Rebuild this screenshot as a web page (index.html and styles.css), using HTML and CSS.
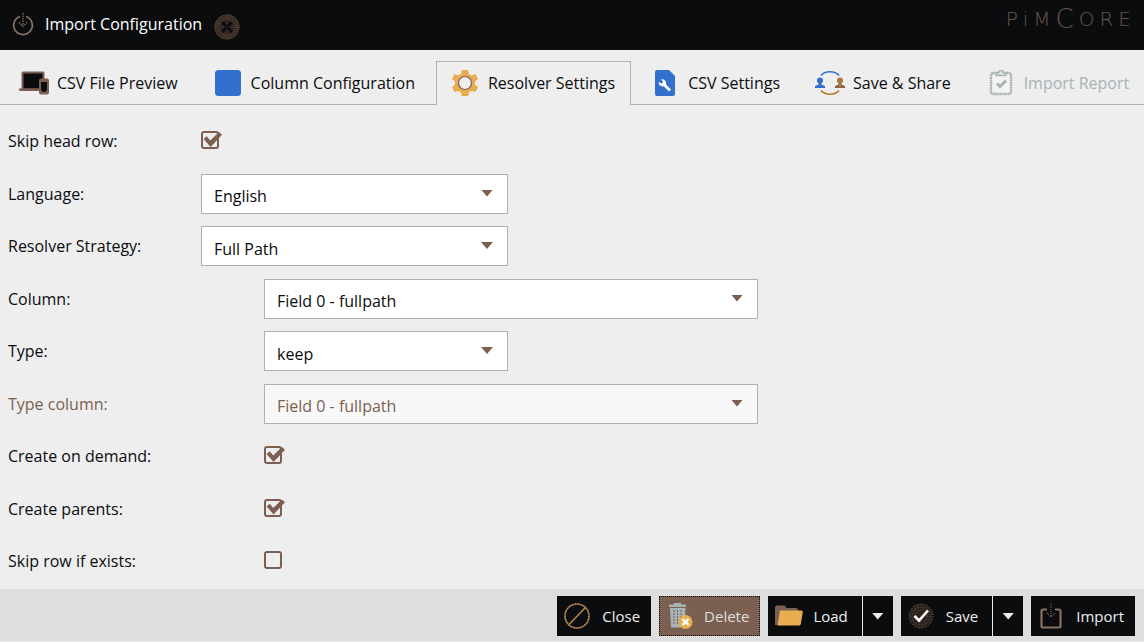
FILE: index.html
```html
<!DOCTYPE html>
<html lang="en">
<head>
<meta charset="utf-8">
<meta name="viewport" content="width=device-width, initial-scale=1">
<title>Import Configuration</title>
<link rel="stylesheet" href="styles.css">
</head>
<body>
<div class="window">
  <header class="titlebar">
    <svg class="title-icon" viewBox="0 0 24 28" fill="none" stroke="#8d756a" stroke-width="1.6">
      <path d="M9 6.500A9.300 9.300 0 1 0 15 6.500"/>
      <path d="M12 3v13M8 12.500l4 4 4-4" stroke-width="1.200" stroke-dasharray="1.500 1"/>
    </svg>
    <h1 class="title">Import Configuration</h1>
    <button class="close-tool" type="button" aria-label="Close window">
      <svg viewBox="0 0 26 26" width="26" height="26">
        <circle cx="13" cy="13" r="12.500" fill="#30261f"/>
        <g fill="none" stroke="#7b6052" stroke-dasharray="1 1"><circle cx="13" cy="13" r="12"/><circle cx="13" cy="13" r="10"/><circle cx="13" cy="13" r="8"/><circle cx="13" cy="13" r="3"/></g>
        <path d="M9 9l2.500 2.500M17 9l-2.500 2.500M9 17l2.500-2.500M17 17l-2.500-2.500" stroke="#0b0c0e" stroke-width="3" stroke-linecap="round"/>
      </svg>
    </button>
    <div class="brand" aria-label="Pimcore"><span>P</span><span>i</span><span>M</span><span class="brand-c">C</span><span>O</span><span>R</span><span>E</span></div>
  </header>

  <nav class="tabs" role="tablist">
    <button class="tab" type="button" role="tab">
      <svg class="icon" viewBox="0 0 30 26">
        <path d="M4 1.500h20a1.500 1.500 0 0 1 1.500 1.500v16H2.500V3A1.500 1.500 0 0 1 4 1.500z" fill="#7b6052"/>
        <path d="M4.500 3.500h19v15h-19z" fill="#0b0c0e"/>
        <path d="M0 18.500h22V21H1.500A1.500 1.500 0 0 1 0 19.500z" fill="#7b6052"/>
        <rect x="20" y="8.500" width="10" height="16" rx="2" fill="#7b6052"/>
        <path d="M22 12h6v8l-2 2h-2l-2-2z" fill="#0b0c0e"/>
      </svg>CSV File Preview</button>
    <button class="tab" type="button" role="tab">
      <svg class="icon" viewBox="0 0 30 26"><rect x="2" width="26" height="26" rx="3.500" fill="#3270cd"/></svg>Column Configuration</button>
    <button class="tab tab-active" type="button" role="tab" aria-selected="true">
      <svg class="icon" viewBox="0 0 30 26">
        <path d="M12 0h6l1 4 2.500 1.500 4-1.500 2.500 5-3 2.500v3l3 2.500-2.500 5-4-1-2.500 1.500-1 4h-6l-1-4-2.500-1.500-4 1L2 17l3-2.500v-3L2 9l2.500-5 4 1.500L11 4z" fill="#e8ad50"/>
        <circle cx="15" cy="13" r="6.500" fill="#eee" stroke="#7b6052" stroke-width="1.200"/>
      </svg>Resolver Settings</button>
    <button class="tab" type="button" role="tab">
      <svg class="icon" viewBox="0 0 30 26">
        <path d="M7 0h12l6 6v18a2 2 0 0 1-2 2H7a2 2 0 0 1-2-2V2a2 2 0 0 1 2-2z" fill="#3270cd"/>
        <path d="M11 9.500a4 4 0 0 1 5 5l5 5-2 2-5.200-5.200a4 4 0 0 1-5-4.800l2.400 2.200 2-2z" fill="#fff"/>
      </svg>CSV Settings</button>
    <button class="tab" type="button" role="tab">
      <svg class="icon" viewBox="0 0 30 26">
        <path d="M6 5.500C10 .500 20 .500 24 5.500" fill="none" stroke="#3270cd" stroke-width="1.600"/>
        <path d="M6 20.500c4 5 14 5 18 0" fill="none" stroke="#b87a2c" stroke-width="1.600"/>
        <circle cx="5" cy="10.500" r="3" fill="#3270cd"/><path d="M3.500 13h3v1.500L10 16v2H0v-2l3.500-1.500z" fill="#3270cd"/>
        <circle cx="25" cy="10.500" r="3" fill="#a97840"/><path d="M23.500 13h3v1.500L30 16v2H20v-2l3.500-1.500z" fill="#8d6548"/>
        <path d="M25 14v4" stroke="#e8ad50" stroke-dasharray="1 1"/>
      </svg>Save &amp; Share</button>
    <button class="tab" type="button" role="tab" disabled>
      <svg class="icon" viewBox="0 0 30 26" fill="none" stroke="#a9b3b5">
        <rect x="5" y="3" width="20" height="21" rx="2.500" stroke-width="2.400" fill="#f3f3f3" stroke-dasharray="2 .5"/>
        <path d="M10 5.500V3h2.500a2.500 2.500 0 0 1 5 0H20v2.500z" stroke-width="1.400" fill="#dfe2e2"/>
        <path d="M11 13.500l3 3 6-6" stroke-width="3"/>
      </svg>Import Report</button>
  </nav>

  <form class="settings" id="settings">
    <div class="row">
      <label class="label" for="skip-head">Skip head row:</label>
      <input class="check" type="checkbox" id="skip-head" checked>
    </div>
    <div class="row">
      <label class="label" for="language">Language:</label>
      <div class="combo combo-medium"><select id="language"><option>English</option></select></div>
    </div>
    <div class="row">
      <label class="label" for="strategy">Resolver Strategy:</label>
      <div class="combo combo-medium"><select id="strategy"><option>Full Path</option></select></div>
    </div>
    <div class="row row-nested">
      <label class="label" for="column">Column:</label>
      <div class="combo combo-wide"><select id="column"><option>Field 0 - fullpath</option></select></div>
    </div>
    <div class="row row-nested">
      <label class="label" for="type">Type:</label>
      <div class="combo combo-narrow"><select id="type"><option>keep</option></select></div>
    </div>
    <div class="row row-nested row-disabled">
      <label class="label" for="type-column">Type column:</label>
      <div class="combo combo-wide"><select id="type-column" disabled><option>Field 0 - fullpath</option></select></div>
    </div>
    <div class="row row-nested">
      <label class="label" for="on-demand">Create on demand:</label>
      <input class="check" type="checkbox" id="on-demand" checked>
    </div>
    <div class="row row-nested">
      <label class="label" for="parents">Create parents:</label>
      <input class="check" type="checkbox" id="parents" checked>
    </div>
    <div class="row row-nested">
      <label class="label" for="skip-existing">Skip row if exists:</label>
      <input class="check" type="checkbox" id="skip-existing">
    </div>
  </form>

  <footer class="actions">
    <button class="action" type="button">
      <svg class="icon" viewBox="0 0 30 26" fill="none">
        <circle cx="14" cy="13" r="12" stroke="#94704f" stroke-width="1.600"/>
        <circle cx="14" cy="13" r="12" stroke="#d29b49" stroke-width="1.200" stroke-dasharray="1 2"/>
        <path d="M6 21.500L22.500 4.500" stroke="#b88849" stroke-width="1.600"/>
      </svg>Close</button>
    <button class="action action-hover" type="button">
      <svg class="icon" viewBox="0 0 30 26">
        <path d="M4 1.500h5V0h7v1.500h5V4H4z" fill="#a9b3b5"/>
        <path d="M5 5h15.500l-1 19.500H6z" fill="#a9b3b5"/>
        <path d="M9 7v15M12.500 7v15M16 7v15" stroke="#7b6052" stroke-dasharray="2 1"/>
        <circle cx="20.500" cy="19" r="7" fill="#e8ad50"/>
        <path d="M17.500 16l6 6M23.500 16l-6 6" stroke="#fff" stroke-width="2.400"/>
      </svg>Delete</button>
    <div class="split">
      <button class="action" type="button">
        <svg class="icon" viewBox="0 0 30 26">
          <path d="M1 4.500a2 2 0 0 1 2-2h7.500l2 2.500H22a2 2 0 0 1 2 2v15H1z" fill="#7b6052"/>
          <path d="M6 7.500h21.500a1.300 1.300 0 0 1 1.300 1.500l-2 12a2 2 0 0 1-2 1.500H3.500z" fill="#e8ad50"/>
        </svg>Load</button>
      <button class="caret" type="button" aria-label="Load options"></button>
    </div>
    <div class="split">
      <button class="action" type="button">
        <svg class="icon" viewBox="0 0 30 26" fill="none">
          <circle cx="14" cy="13" r="12" fill="#2c231f"/>
          <g stroke="#7b6052"><circle cx="14" cy="13" r="12" stroke-dasharray="1 1.500"/><circle cx="14" cy="13" r="9" stroke-dasharray="1 2"/><circle cx="14" cy="13" r="6" stroke-dasharray="1 2"/></g>
          <path d="M7.500 13l4.500 4.500 9-10" stroke="#fff" stroke-width="2.600"/>
        </svg>Save</button>
      <button class="caret" type="button" aria-label="Save options"></button>
    </div>
    <button class="action" type="submit" form="settings">
      <svg class="icon" viewBox="0 0 30 26" fill="none">
        <path d="M10 6.500H6A1.500 1.500 0 0 0 4.500 8v15A1.500 1.500 0 0 0 6 24.500h16a1.500 1.500 0 0 0 1.500-1.500V8A1.500 1.500 0 0 0 22 6.500h-4" stroke="#8a6e60" stroke-width="2.200"/>
        <path d="M14 0v14M10 10l4 4 4-4" stroke="#7b6052" stroke-width="1.200" stroke-dasharray="1 1"/>
      </svg>Import</button>
  </footer>
</div>
</body>
</html>
```
FILE: styles.css
```css
* {
  box-sizing: border-box;
}

body {
  margin: 0;
  background: #eee;
  color: #0b0c0e;
  font: 16px/24px "Open Sans", "Noto Sans", sans-serif;
}

button,
select {
  font: inherit;
  color: inherit;
}

button {
  margin: 0;
  border: 0;
  background: none;
  white-space: nowrap;
}

.window {
  display: flex;
  flex-direction: column;
  min-height: 100vh;
}

/* Title bar */
.titlebar {
  display: flex;
  align-items: center;
  height: 50px;
  padding: 0 13px 2px 11px;
  background: #0b0c0e;
  color: #fff;
}

.title-icon {
  width: 24px;
  height: 28px;
}

.title {
  margin: 0 6px 0 10px;
  font-size: 16px;
  font-weight: 400;
}

.close-tool {
  display: flex;
  padding: 6px 6px 0;
}

.brand {
  display: flex;
  align-items: center;
  gap: 5px;
  margin-left: auto;
  padding-bottom: 10px;
  color: #6b5549;
  font-family: "DejaVu Sans", sans-serif;
  font-size: 20px;
  font-weight: 200;
  line-height: 20px;
}

.brand-c {
  font-size: 26px;
}

/* Tabs */
.tabs {
  display: flex;
  align-items: flex-end;
  gap: 5px;
  height: 55px;
  padding-left: 5px;
  box-shadow: inset 0 -1px #a9b3b5;
}

.tab {
  display: flex;
  align-items: center;
  gap: 8px;
  height: 44px;
  padding: 0 15px 2px 13px;
  border: 1px solid transparent;
  border-bottom: 0;
}

.tab-active {
  border-color: #a9b3b5;
  background: #eee;
}

.tab:disabled {
  color: #a9b3b5;
}

.icon {
  flex: none;
  width: 30px;
  height: 26px;
}

/* Form */
.settings {
  display: flex;
  flex: 1;
  flex-direction: column;
  justify-content: space-between;
  padding: 16px 8px 8px;
}

.row {
  display: flex;
  align-items: center;
  height: 40px;
}

.label {
  flex: none;
  width: 193px;
}

.row-nested .label {
  width: 256px;
}

.row-disabled {
  color: #7b6052;
}

.combo {
  position: relative;
  flex: 0 1 auto;
  height: 40px;
}

.combo-narrow {
  width: 244px;
}

.combo-medium {
  width: 307px;
}

.combo-wide {
  width: 494px;
}

.combo select {
  width: 100%;
  height: 100%;
  padding: 5px 40px 0 12px;
  border: 1px solid #a9b3b5;
  border-radius: 0;
  background: #fff;
  appearance: none;
}

.combo select:disabled {
  background: #f8f8f8;
  opacity: 1;
}

.combo::after {
  position: absolute;
  top: 16px;
  right: 15px;
  width: 12px;
  height: 7px;
  background: #7b6052;
  clip-path: polygon(0 0, 100% 0, 50% 100%);
  content: "";
  pointer-events: none;
}

.check {
  position: relative;
  width: 18px;
  height: 18px;
  margin: 0 0 2px;
  border: 2px solid #7b6052;
  border-radius: 3px;
  appearance: none;
}

.check:checked::after {
  position: absolute;
  top: -1px;
  left: 0;
  width: 19px;
  height: 15px;
  background: #7b6052;
  clip-path: polygon(3% 46%, 20% 28%, 38% 56%, 84% 0, 100% 18%, 40% 100%);
  content: "";
}

/* Footer */
.actions {
  display: flex;
  flex-wrap: wrap;
  justify-content: flex-end;
  gap: 8px;
  padding: 7px 9px 5px;
  border-bottom: 1px solid #eee;
  background: #dedede;
  font-size: 15px;
}

.action {
  display: flex;
  align-items: center;
  gap: 9px;
  height: 40px;
  padding: 0 11px 0 6px;
  background: #0b0c0e;
  color: #eee;
}

.action-hover {
  outline: 1px dotted #0b0c0e;
  outline-offset: -1px;
  background: #7b6052;
  color: #dedede;
}

.split {
  display: flex;
}

.split .action {
  padding-right: 14px;
}

.caret {
  display: grid;
  place-items: center;
  width: 31px;
  height: 40px;
  padding: 0;
  border-left: 1px solid #eee;
  background: #0b0c0e;
}

.caret::before {
  width: 12px;
  height: 7px;
  background: #eee;
  clip-path: polygon(0 0, 100% 0, 50% 100%);
  content: "";
}
```
